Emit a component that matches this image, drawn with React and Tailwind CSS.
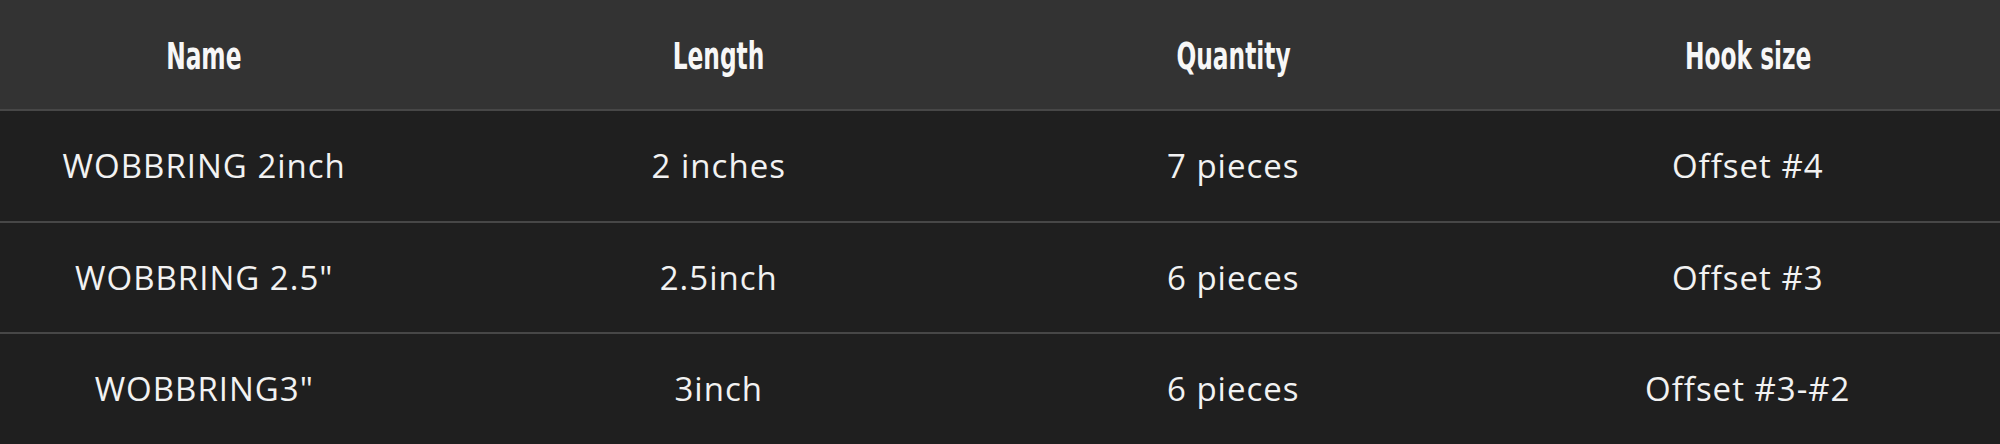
const columns = ['Name', 'Length', 'Quantity', 'Hook size'];

const rows = [
  ['WOBBRING 2inch', '2 inches', '7 pieces', 'Offset #4'],
  ['WOBBRING 2.5"', '2.5inch', '6 pieces', 'Offset #3'],
  ['WOBBRING3"', '3inch', '6 pieces', 'Offset #3-#2'],
];

export default function App() {
  return (
    <div className="w-[2000px] h-[444px] overflow-hidden bg-[#1f1f1f]">
      <div className="w-[2058px] h-full -ml-[53px] flex flex-col">
        {/* Header */}
        <div className="h-[109px] shrink-0 grid grid-cols-4 bg-[#333333]">
          {columns.map((c) => (
            <div key={c} className="flex items-center justify-center pt-[5px]">
              <span className="inline-block text-[37px] font-bold text-[#f7f7f7] [font-family:'DejaVu_Sans_Condensed',sans-serif] scale-x-[0.7]">
                {c}
              </span>
            </div>
          ))}
        </div>

        {/* Rows */}
        {rows.map((r, i) => (
          <div key={i} className="flex-1 grid grid-cols-4 border-t-2 border-[#474747] bg-[#1f1f1f]">
            {r.map((cell, j) => (
              <div
                key={j}
                className="flex items-center justify-center text-[33px] tracking-[1px] text-[#f2f2f2] [font-family:'Open_Sans',sans-serif]"
              >
                {cell}
              </div>
            ))}
          </div>
        ))}
      </div>
    </div>
  );
}
